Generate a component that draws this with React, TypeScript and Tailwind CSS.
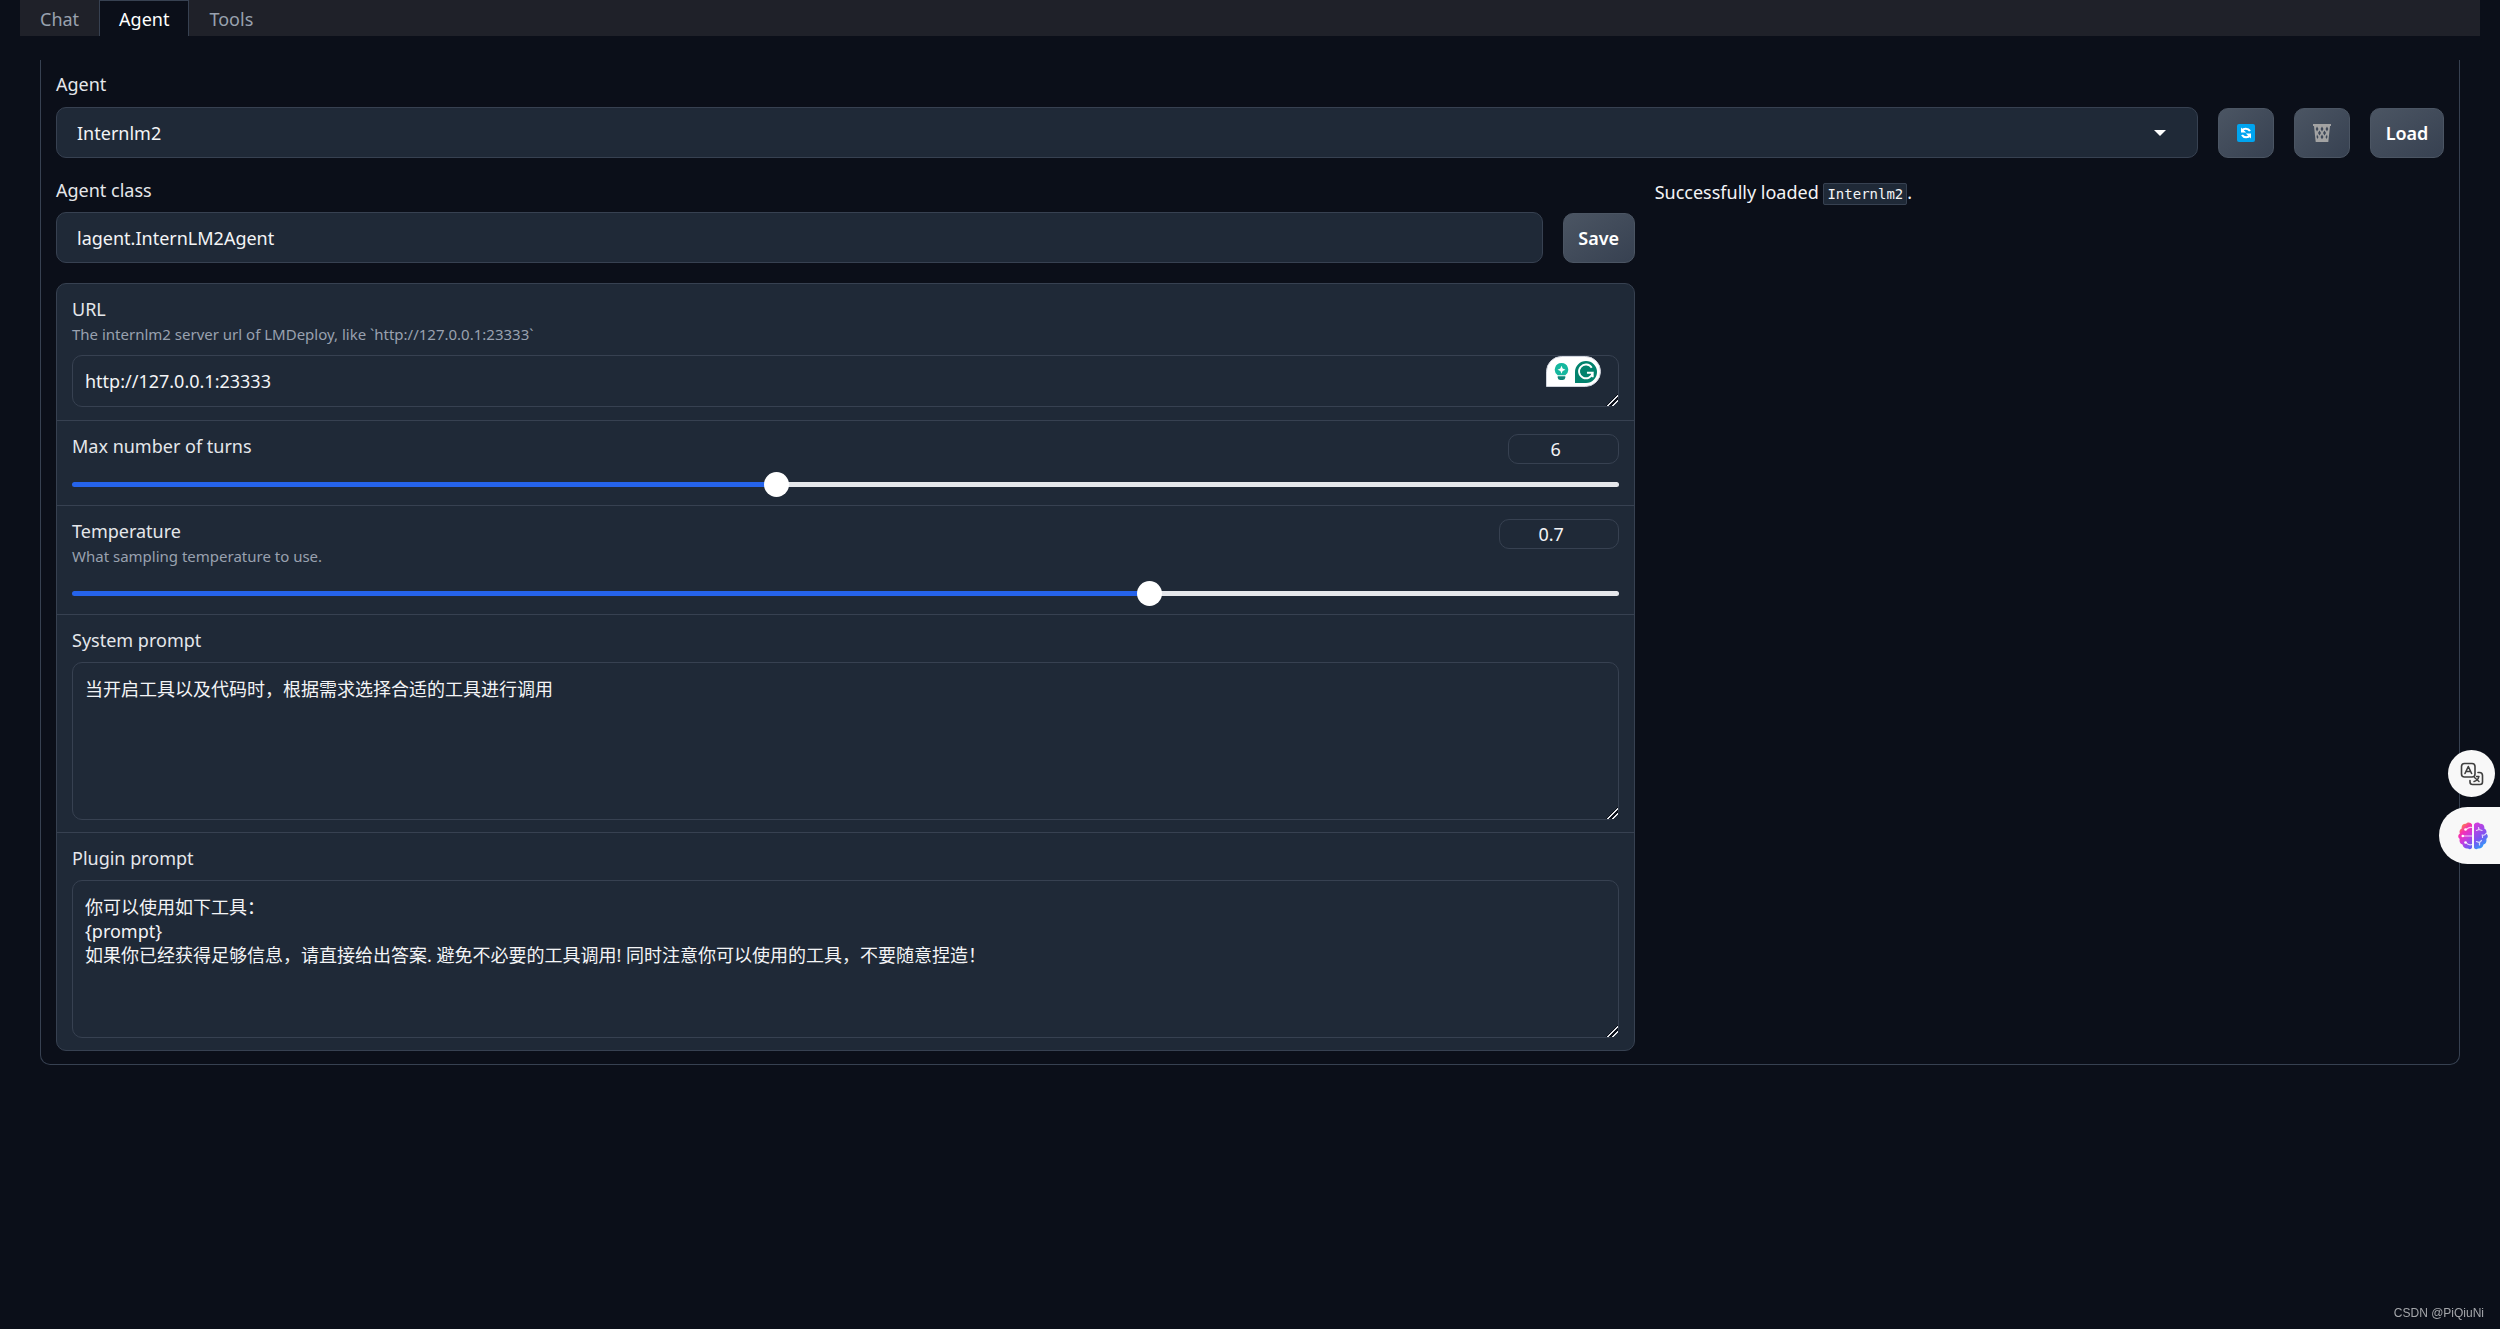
import { useState } from 'react';
import type { CSSProperties, ReactNode } from 'react';
import clsx from 'clsx';

const TABS = ['Chat', 'Agent', 'Tools'];

const secondaryButton =
  'flex h-[50px] shrink-0 items-center justify-center rounded-[10px] border border-[#4b5563] bg-linear-to-br from-[#4b5563] to-[#374151] text-lg font-semibold text-white';
const fieldText = 'text-lg text-gray-100';
const labelText = 'block text-lg leading-6 text-gray-200';
const textareaBox =
  'block w-full rounded-[10px] border border-[#374151] px-3 leading-6 [&::-webkit-resizer]:bg-[linear-gradient(135deg,transparent_57%,#0b0f19_57%,#0b0f19_62%,#e5e7eb_62%,#e5e7eb_69%,#0b0f19_69%,#0b0f19_78%,#e5e7eb_78%,#e5e7eb_85%,transparent_85%)]';

function RefreshIcon() {
  return (
    <svg width="18" height="18" viewBox="0 0 18 18" aria-hidden="true">
      <rect width="18" height="18" rx="2" fill="#00a4ef" />
      <path d="M5 6.6C6.4 4.3 11 3.8 13 7" fill="none" stroke="#fff" strokeWidth="2.2" />
      <path d="M4 3.4v5.2h5.2z" fill="#fff" />
      <path d="M13 11.4C11.6 13.7 7 14.2 5 11" fill="none" stroke="#fff" strokeWidth="2.2" />
      <path d="M14 14.6V9.4H8.8z" fill="#fff" />
    </svg>
  );
}

function TrashIcon() {
  return (
    <svg width="18" height="18" viewBox="0 0 18 18" aria-hidden="true">
      <path d="M0 0h18v2h-1l-1.700 16H2.700L1 2H0z" fill="#a3a3a3" />
      <path
        d="M4 2.500 5.500 5 4 7.500 2.700 5zM9 2.500 10.500 5 9 7.500 7.500 5zM14 2.500 15.300 5 14 7.500 12.500 5zM6.500 6.500 8 9 6.500 11.500 5 9zM11.500 6.500 13 9l-1.500 2.500L10 9zM4 10.500 5.500 13 4.500 15 3.500 13zM9 10.500 10.500 13 9 15.200 7.500 13zM14 10.500 14.500 13l-1 2-1-2z"
        fill="#3f4959"
      />
    </svg>
  );
}

function TranslateIcon() {
  return (
    <svg width="24" height="24" viewBox="0 0 24 24" fill="none" stroke="#3f3f3f" strokeWidth="1.6" strokeLinecap="round" strokeLinejoin="round" aria-hidden="true">
      <rect x="1.5" y="1.5" width="13.5" height="13.5" rx="3" />
      <path d="m5 11.500 3.300-7 3.300 7M6 9.500h4.600" />
      <path d="M18 10.500h1.500a3 3 0 0 1 3 3V20a2.500 2.500 0 0 1-2.500 2.500h-7.500a2.500 2.500 0 0 1-2.500-2.500v-1.500" />
      <path d="M14 19.500c2.500-.5 4-2 4.800-4.500M14.500 15.500l4.500 4M16.500 14.500h2.500" strokeWidth="1.4" />
    </svg>
  );
}

function BrainIcon() {
  return (
    <svg width="30" height="28" viewBox="0 0 30 28" aria-hidden="true">
      <defs>
        <linearGradient id="brain-left" x1="0.2" y1="0" x2="0.7" y2="1">
          <stop offset="0" stopColor="#ff9d1e" />
          <stop offset="0.35" stopColor="#f72fb4" />
          <stop offset="0.65" stopColor="#c63be0" />
          <stop offset="1" stopColor="#6b5cf5" />
        </linearGradient>
        <linearGradient id="brain-right" x1="0.3" y1="0" x2="0.7" y2="1">
          <stop offset="0" stopColor="#d03ddd" />
          <stop offset="0.55" stopColor="#7a55f2" />
          <stop offset="1" stopColor="#1fb0fa" />
        </linearGradient>
      </defs>
      <path
        d="M14 2.500C13 .2 9.500-.3 8 1.800 5 1.500 3 4 3.800 6.500 1.500 7.500 1 10 2 11.500c-2.300 1.300-2.300 4.200-.3 5.500-.7 3 .8 5 2.800 5.500.5 3 3 4.500 5.500 4 1.800 1.300 3.500.500 4-1z"
        fill="url(#brain-left)"
      />
      <path
        d="M16 2.500c1-2.300 4.500-2.800 6-.7 3-.3 5 2.200 4.200 4.700 2.300 1 2.800 3.500 1.800 5 2.300 1.300 2.300 4.200.3 5.500.7 3-.8 5-2.800 5.500-.5 3-3 4.500-5.500 4-1.800 1.300-3.500.500-4-1z"
        fill="url(#brain-right)"
      />
      <g fill="none" stroke="#fff" strokeOpacity="0.75" strokeWidth="1.2" strokeLinecap="round">
        <path d="M14 5.500c-3-1-4 1-6 2M14 14H5M14 22.500c-2.500.8-4.500 0-6-2" />
        <path d="M18.500 8.500 21 7.500l-.5-2M21 7.500l3 1M28 11.500c-1 2-2.500 2-4 1.500M24.500 13v2.500M18.500 19.500l3 1 2-2M21.500 20.500v2.500" />
      </g>
      <g fill="#fff">
        <circle cx="7.5" cy="7.5" r="1.3" />
        <circle cx="4.8" cy="14" r="1.3" />
        <circle cx="7.5" cy="20.5" r="1.3" />
      </g>
    </svg>
  );
}

function WritingAssistant() {
  return (
    <div className="absolute top-px right-[18px] flex h-[31px] w-[55px] items-center justify-between rounded-full rounded-bl-none border border-[#cfd3dc] bg-white pr-[3px] pl-[7px]">
      <svg width="15" height="19" viewBox="0 0 17 20" aria-hidden="true">
        <path d="M8.500.5a7.500 7.500 0 0 0-4.300 13.700h8.600A7.500 7.500 0 0 0 8.500.5z" fill="#15b79e" />
        <path d="m8.500 3.500 1.300 3.200L13 8l-3.200 1.300-1.300 3.200-1.300-3.200L4 8l3.200-1.300z" fill="#fff" />
        <path d="M4.200 15.500h8.600v1.300q0 2.700-2.700 2.700H6.900q-2.700 0-2.700-2.700z" fill="#0c8577" />
      </svg>
      <svg width="22" height="22" viewBox="0 0 23 23" aria-hidden="true">
        <path d="M11.500 0A11.500 11.500 0 0 1 11.500 23H0V11.500A11.500 11.500 0 0 1 11.500 0z" fill="#02826d" />
        <path d="M17.500 7A7.200 7.200 0 1 0 18.500 12.200H12.500M18.500 12v5" fill="none" stroke="#fff" strokeWidth="2" />
      </svg>
    </div>
  );
}

interface BlockProps {
  children: ReactNode;
  className?: string;
}

function Block({ children, className }: BlockProps) {
  return <div className={clsx('border-b border-[#374151] px-[15px] pt-[13px] last:border-b-0', className)}>{children}</div>;
}

interface PromptFieldProps {
  id: string;
  label: string;
  value: string;
}

function PromptField({ id, label, value }: PromptFieldProps) {
  return (
    <Block className="pb-3">
      <label className={`${labelText} mb-2.5`} htmlFor={id}>{label}</label>
      <textarea className={`${fieldText} ${textareaBox} h-[158px] py-3.5`} defaultValue={value} id={id} />
    </Block>
  );
}

interface SliderFieldProps {
  id: string;
  label: string;
  info?: string;
  min: number;
  max: number;
  step: number;
  initial: number;
  numberClass: string;
}

function SliderField({ id, label, info, min, max, step, initial, numberClass }: SliderFieldProps) {
  const [value, setValue] = useState(initial);
  const fill = { '--fill': `${((value - min) / (max - min)) * 100}%` } as CSSProperties;

  return (
    <Block className="pb-2">
      <div className={clsx('flex items-start justify-between', info ? 'mb-[15px]' : 'mb-2')}>
        <div>
          <label className={labelText} htmlFor={id}>{label}</label>
          {info ? <p className="mt-[3px] text-[15px] leading-5 text-gray-400">{info}</p> : null}
        </div>
        <input
          aria-label={`${label} value`}
          className={`${fieldText} h-[30px] rounded-[10px] border border-[#374151] px-2.5 text-center ${numberClass}`}
          max={max}
          min={min}
          onChange={(event) => setValue(Number(event.target.value))}
          step={step}
          type="number"
          value={value}
        />
      </div>
      <input
        className="block h-[25px] w-full appearance-none bg-transparent [&::-webkit-slider-runnable-track]:h-[5px] [&::-webkit-slider-runnable-track]:rounded-full [&::-webkit-slider-runnable-track]:bg-[linear-gradient(to_right,#2563eb_var(--fill),#e5e7eb_var(--fill))] [&::-webkit-slider-thumb]:-mt-2.5 [&::-webkit-slider-thumb]:size-[25px] [&::-webkit-slider-thumb]:appearance-none [&::-webkit-slider-thumb]:rounded-full [&::-webkit-slider-thumb]:bg-white"
        id={id}
        max={max}
        min={min}
        onChange={(event) => setValue(Number(event.target.value))}
        step={step}
        style={fill}
        type="range"
        value={value}
      />
    </Block>
  );
}

export default function App() {
  const [activeTab, setActiveTab] = useState('Agent');

  return (
    <div className="min-h-screen bg-[#0b0f19] px-5 font-['Noto_Sans','Noto_Sans_CJK_SC',sans-serif] text-lg text-gray-100 scheme-dark">
      <div className="flex h-9 bg-[#1f2129]" role="tablist">
        {TABS.map((tab) => (
          <button
            aria-selected={tab === activeTab}
            className={clsx(
              'border border-b-0 px-[19px] text-lg leading-6',
              tab === activeTab ? 'border-[#374151] bg-[#0b0f19] text-white' : 'border-transparent text-gray-400'
            )}
            key={tab}
            onClick={() => setActiveTab(tab)}
            role="tab"
            type="button"
          >
            {tab}
          </button>
        ))}
      </div>

      <main className="mx-5 mt-6 rounded-b-[10px] border border-t-0 border-[#374151] px-[15px] pt-3 pb-[13px]">
        <div className="flex items-end gap-5">
          <div className="min-w-0 flex-1">
            <label className={`${labelText} mb-[11px]`} htmlFor="agent">Agent</label>
            <div className="relative">
              <select
                className={`${fieldText} block h-[51px] w-full appearance-none rounded-[10px] border border-[#374151] bg-[#1f2937] px-5`}
                id="agent"
              >
                <option>Internlm2</option>
              </select>
              <svg className="pointer-events-none absolute top-[23px] right-8" width="12" height="6" viewBox="0 0 12 6" aria-hidden="true">
                <path d="M0 0h12L6 6z" fill="#fff" />
              </svg>
            </div>
          </div>
          <button aria-label="Refresh agents" className={`${secondaryButton} w-14`} type="button"><RefreshIcon /></button>
          <button aria-label="Delete agent" className={`${secondaryButton} w-14`} type="button"><TrashIcon /></button>
          <button className={`${secondaryButton} w-[74px]`} type="button">Load</button>
        </div>

        <div className="mt-5 flex gap-5">
          <div className="min-w-0 flex-2">
            <div className="flex items-end gap-5">
              <div className="min-w-0 flex-1">
                <label className={`${labelText} mb-2.5`} htmlFor="agent-class">Agent class</label>
                <input
                  className={`${fieldText} block h-[51px] w-full rounded-[10px] border border-[#374151] bg-[#1f2937] px-5`}
                  defaultValue="lagent.InternLM2Agent"
                  id="agent-class"
                  type="text"
                />
              </div>
              <button className={`${secondaryButton} w-[72px]`} type="button">Save</button>
            </div>

            <div className="mt-5 rounded-[10px] border border-[#374151] bg-[#1f2937]">
              <Block className="pb-[13px]">
                <label className={labelText} htmlFor="url">URL</label>
                <p className="mt-[3px] mb-[11px] text-[15px] leading-5 text-gray-400">
                  The internlm2 server url of LMDeploy, like `http://127.0.0.1:23333`
                </p>
                <div className="relative">
                  <textarea
                    className={`${fieldText} ${textareaBox} h-[52px] overflow-hidden py-[13px]`}
                    defaultValue="http://127.0.0.1:23333"
                    id="url"
                  />
                  <WritingAssistant />
                </div>
              </Block>
              <SliderField id="max-turns" initial={6} label="Max number of turns" max={12} min={1} numberClass="w-[111px]" step={1} />
              <SliderField
                id="temperature"
                info="What sampling temperature to use."
                initial={0.7}
                label="Temperature"
                max={1}
                min={0}
                numberClass="w-[120px]"
                step={0.1}
              />
              <PromptField id="system-prompt" label="System prompt" value="当开启工具以及代码时，根据需求选择合适的工具进行调用" />
              <PromptField
                id="plugin-prompt"
                label="Plugin prompt"
                value={'你可以使用如下工具：\n{prompt}\n如果你已经获得足够信息，请直接给出答案. 避免不必要的工具调用! 同时注意你可以使用的工具，不要随意捏造！'}
              />
            </div>
          </div>

          <p className="min-w-0 flex-1 pt-0.5 leading-6">
            Successfully loaded{' '}
            <code className="rounded-xs border border-[#374151] bg-[#1f2937] px-[3px] py-0.5 font-['DejaVu_Sans_Mono',monospace] text-sm">Internlm2</code>.
          </p>
        </div>
      </main>

      <button
        aria-label="Translate page"
        className="fixed top-[750px] right-[5px] flex size-[47px] items-center justify-center rounded-full bg-[#f8f8f8]"
        type="button"
      >
        <TranslateIcon />
      </button>
      <button
        aria-label="Open assistant"
        className="fixed top-[807px] right-0 flex h-[57px] w-[61px] items-center justify-end rounded-l-full bg-[#f8f8f8] pr-3"
        type="button"
      >
        <BrainIcon />
      </button>
      <p className="fixed right-4 bottom-2 font-['Liberation_Sans',sans-serif] text-xs leading-4 text-[#a5a7ab]">CSDN @PiQiuNi</p>
    </div>
  );
}
